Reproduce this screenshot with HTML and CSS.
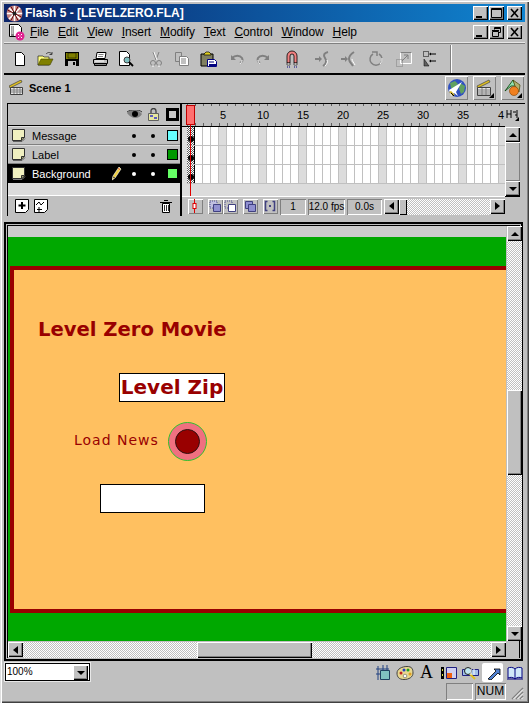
FILE: index.html
```html
<!DOCTYPE html>
<html lang="en">
<head>
    <meta charset="UTF-8">
    <meta name="viewport" content="width=device-width, initial-scale=1.0">
    <title>Flash 5 - [LEVELZERO.FLA]</title>
    <link rel="stylesheet" href="styles.css">
</head>
<body>
<div class="window">

    <!-- Title bar -->
    <div class="titlebar">
        <svg class="app-logo" width="17" height="17" viewBox="0 0 17 17">
            <circle cx="8.5" cy="8.5" r="8" fill="#c08080"/>
            <path d="M8.5 1v15M1 8.5h15M3 3l11 11M14 3L3 14" stroke="#fff" stroke-width="1.5"/>
            <path d="M5 1.5l7 14M1.5 5l14 7M12 1.5l-7 14" stroke="#701010" stroke-width="1"/>
            <circle cx="8.5" cy="8.5" r="2" fill="#202020"/>
        </svg>
        <span class="title-text">Flash 5 - [LEVELZERO.FLA]</span>
        <div class="win-buttons">
            <span class="win-btn"><svg width="15" height="14" viewBox="0 0 15 14"><rect x="3" y="10" width="6" height="2" fill="#000"/></svg></span>
            <span class="win-btn"><svg width="15" height="14" viewBox="0 0 15 14"><path d="M2.5 2.5h10v9h-10z M2 3.5h11" fill="none" stroke="#000"/></svg></span>
            <span class="win-btn win-btn-last"><svg width="15" height="14" viewBox="0 0 15 14"><path d="M4 3l7 8M11 3l-7 8" stroke="#000" stroke-width="1.6"/></svg></span>
        </div>
    </div>

    <!-- Menu -->
    <div class="menubar">
        <svg class="doc-icon" width="17" height="17" viewBox="0 0 17 17">
            <path d="M1.5.5h9l3 3v9h-12z" fill="#fff" stroke="#000"/>
            <path d="M3 2h3v10H3z" fill="#808080"/>
            <path d="M3.5 3h2M3.5 5h2M3.5 7h2M3.5 9h2" stroke="#fff"/>
            <circle cx="12" cy="12" r="4.5" fill="#e02090"/>
            <path d="M10 10h1v1h-1zM13 10h1v1h-1zM10 13h1v1h-1zM13 13h1v1h-1zM11.5 11.5h1v1h-1z" fill="#fff"/>
        </svg>
        <span class="menu-item"><u>F</u>ile</span>
        <span class="menu-item"><u>E</u>dit</span>
        <span class="menu-item"><u>V</u>iew</span>
        <span class="menu-item"><u>I</u>nsert</span>
        <span class="menu-item"><u>M</u>odify</span>
        <span class="menu-item"><u>T</u>ext</span>
        <span class="menu-item"><u>C</u>ontrol</span>
        <span class="menu-item"><u>W</u>indow</span>
        <span class="menu-item"><u>H</u>elp</span>
        <div class="win-buttons doc-buttons">
            <span class="win-btn"><svg width="15" height="14" viewBox="0 0 15 14"><rect x="3" y="10" width="6" height="2" fill="#000"/></svg></span>
            <span class="win-btn"><svg width="15" height="14" viewBox="0 0 15 14"><path d="M5.5 4.5v-2h6v5h-2M3.5 6.5h6v5h-6z M3 5.5h7M5 3.5h7" fill="none" stroke="#000"/></svg></span>
            <span class="win-btn win-btn-last"><svg width="15" height="14" viewBox="0 0 15 14"><path d="M4 3l7 8M11 3l-7 8" stroke="#000" stroke-width="1.6"/></svg></span>
        </div>
    </div>

    <!-- Main toolbar -->
    <div class="toolbar">
        <span class="tool"><svg width="16" height="16" viewBox="0 0 16 16"><path d="M3.5 1.5h6l3 3v10h-9z" fill="#fff" stroke="#000"/></svg></span>
        <span class="tool"><svg width="18" height="16" viewBox="0 0 18 16"><path d="M1 5h5l1 1h5v8H1z" fill="#ffff80" stroke="#000" stroke-width=".6"/><path d="M1 14l3-6h12l-3 6z" fill="#808000" stroke="#404000" stroke-width=".6"/><path d="M9 3c2-2 4-2 6 0M15 1v2.500h-2.500" fill="none" stroke="#404040"/></svg></span>
        <span class="tool"><svg width="16" height="16" viewBox="0 0 16 16"><path d="M1 1h14v14H1z" fill="#000"/><path d="M2 2h12v6H2z" fill="#808000"/><path d="M4 2h8v5H4z" fill="#808000" stroke="#000" stroke-width=".5"/><path d="M4 10h8v5H4z" fill="#c0c0c0"/><path d="M9 11h2v3H9z" fill="#000"/></svg></span>
        <span class="tool tool-gap2"><svg width="17" height="16" viewBox="0 0 17 16"><path d="M5 1.500h9l-1 6H4z" fill="#fff" stroke="#000"/><path d="M6.500 3.500h5M6 5.500h5" stroke="#808080"/><path d="M1.500 8.500h14v4h-14z" fill="#c0c0c0" stroke="#000"/><path d="M2.500 12.500h12v2h-12z" fill="#808080" stroke="#000"/><path d="M3 10h9" stroke="#fff"/></svg></span>
        <span class="tool"><svg width="17" height="16" viewBox="0 0 17 16"><path d="M1.500.5h7l3 3v11h-10z" fill="#fff" stroke="#000"/><circle cx="9" cy="9" r="3" fill="#80c0c0" stroke="#404040"/><path d="M11 11l4 4" stroke="#000" stroke-width="1.800"/></svg></span>
        <span class="tool tool-gap4"><svg width="16" height="16" viewBox="0 0 16 16" fill="none" stroke="#808080"><path d="M5 1l3 8M11 1L8 9"/><path d="M6 1l3 8" stroke="#fff"/><circle cx="5" cy="12" r="2.500" stroke="#808080"/><circle cx="11" cy="12" r="2.500"/><path d="M4 15h2M10 15h2" stroke="#fff"/></svg></span>
        <span class="tool"><svg width="16" height="16" viewBox="0 0 16 16"><path d="M1.500 1.500h6v9h-6z" fill="#c0c0c0" stroke="#808080"/><path d="M5.500 5.500h7l2 2v7h-9z" fill="#fff" stroke="#808080"/><path d="M7 8h5M7 10h5M7 12h5" stroke="#808080"/></svg></span>
        <span class="tool"><svg width="17" height="16" viewBox="0 0 17 16"><path d="M1 3h12v12H1z" fill="#808060" stroke="#000"/><path d="M4 3l2-2h3l2 2v1H4z" fill="#e0d020" stroke="#000" stroke-width=".7"/><path d="M7.500 8.500h7l2 2v5h-9z" fill="#fff" stroke="#000080"/><path d="M9 10.500h5v1H9zM9 13h7v2H9z" fill="#000080"/></svg></span>
        <span class="tool tool-gap3"><svg width="16" height="16" viewBox="0 0 16 16" fill="none"><path d="M3 7c3-3 8-3 10 0 1 2 0 4-2 5" stroke="#808080" stroke-width="2"/><path d="M2 4v5h5z" fill="#808080"/><path d="M13 9c0 2-1 3-2 4" stroke="#fff"/></svg></span>
        <span class="tool"><svg width="16" height="16" viewBox="0 0 16 16" fill="none"><path d="M13 7C10 4 5 4 3 7c-1 2 0 4 2 5" stroke="#808080" stroke-width="2"/><path d="M14 4v5H9z" fill="#808080"/><path d="M3 9c0 2 1 3 2 4" stroke="#fff"/></svg></span>
        <span class="tool tool-gap3"><svg width="16" height="18" viewBox="0 0 16 18"><path d="M3 13V6a5 5 0 0 1 10 0v7h-3V6a2 2 0 0 0-4 0v7z" fill="#f08080" stroke="#000" stroke-width=".8"/><path d="M3 13h3v2H3zM10 13h3v2h-3z" fill="#fff" stroke="#000" stroke-width=".6"/><path d="M3 17h1M5 17h1M10 17h1M12 17h1" stroke="#000080"/></svg></span>
        <span class="tool tool-gap4"><svg width="16" height="16" viewBox="0 0 16 16" fill="none"><path d="M1 8h6" stroke="#808080" stroke-width="2"/><path d="M5 5l3 3-3 3z" fill="#808080"/><path d="M14 1c-4 1-5 3-3 6 2 3 1 6-2 8" stroke="#808080" stroke-width="2"/><path d="M13 9c1 2 0 4-2 6" stroke="#fff"/></svg></span>
        <span class="tool"><svg width="16" height="16" viewBox="0 0 16 16" fill="none"><path d="M1 8h6" stroke="#808080" stroke-width="2"/><path d="M5 5l3 3-3 3z" fill="#808080"/><path d="M14 1c-3 2-5 4-5 7s3 5 4 7" stroke="#808080" stroke-width="2"/><path d="M12 8c0 2 2 4 3 6" stroke="#fff"/></svg></span>
        <span class="tool tool-gap2"><svg width="16" height="16" viewBox="0 0 16 16" fill="none"><path d="M5 3a6 6 0 1 0 6 0" stroke="#808080" stroke-width="1.500"/><path d="M12 13a6 6 0 0 0 2-6" stroke="#fff"/><path d="M4 1h5v4" stroke="#808080" stroke-width="1.500"/></svg></span>
        <span class="tool tool-gap2"><svg width="16" height="16" viewBox="0 0 16 16" fill="none"><path d="M4.500 1.500h11v11h-11z" fill="#c0c0c0" stroke="#fff"/><path d="M4.500 1.500h11" stroke="#808080"/><path d="M.5 8.500h6v7h-6z" stroke="#808080" stroke-dasharray="1 1"/><path d="M6 10l6-6M8 4h4v4" stroke="#808080"/></svg></span>
        <span class="tool"><svg width="14" height="16" viewBox="0 0 14 16"><path d="M.5.500h5v5h-5z" fill="#c0c0c0" stroke="#000" stroke-dasharray="1 1"/><path d="M1 8l5 7H1z" fill="#606060" stroke="#000" stroke-width=".5"/><path d="M8 3h5M8 10h5" stroke="#000"/><path d="M8 1.500l-2 1.500 2 1.500zM8 8.500l-2 1.500 2 1.500z" fill="#000"/></svg></span>
    </div>

    <!-- Scene bar -->
    <div class="scenebar">
        <svg class="clapper" width="14" height="15" viewBox="0 0 14 15">
            <path d="M0 6L12 0l1 2L1 8z" fill="#e0c020" stroke="#404040" stroke-width=".7"/>
            <path d="M1.500 7.500h12v7h-12z" fill="#e8e8e8" stroke="#404040"/>
            <path d="M2 10h11M2 12h11M5 8v6M8 8v6M11 8v6" stroke="#808080"/>
        </svg>
        <span class="scene-name">Scene 1</span>
        <div class="scene-buttons">
            <span class="scene-btn"><svg width="20" height="20" viewBox="0 0 20 20"><circle cx="10" cy="10" r="9" fill="#3050c0"/><path d="M3 5l5-2 3 3-4 5-3-1zM13 5l5 3-1 6-3 2-2-5z" fill="#60a060"/><path d="M2 12l13-8-6 10 2 4-4-3-3 3z" fill="#fff"/><path d="M2 14l4 4 2-1-4-4z" fill="#d0b020"/><path d="M4 15l3 3" stroke="#000"/></svg></span>
            <span class="scene-btn scene-btn-menu"><svg width="18" height="18" viewBox="0 0 18 18"><path d="M1 7L13 1l1 2L2 9z" fill="#e0c020" stroke="#404040" stroke-width=".7"/><path d="M1.500 8.500h13v8h-13z" fill="#e8e8e8" stroke="#404040"/><path d="M2 11h12M2 13h12M2 15h12M6 9v7M10 9v7" stroke="#808080"/></svg></span>
            <span class="scene-btn scene-btn-menu"><svg width="18" height="18" viewBox="0 0 18 18"><path d="M1 12L9 1l3 6H7z" fill="#90e0b0" stroke="#004000" stroke-width=".8"/><path d="M9 1l7 5-1 7-4-6z" fill="#b0b070" stroke="#404000" stroke-width=".7"/><circle cx="10" cy="12" r="4.500" fill="#f08020" stroke="#804000" stroke-width=".6"/></svg></span>
        </div>
    </div>

    <!-- Timeline -->
    <div class="timeline">
        <div class="layers">
            <div class="layers-head">
                <svg class="eye-icon" width="16" height="10" viewBox="0 0 16 10">
                    <path d="M0 3c4-4 11-4 15 1-3 5-10 6-15-1z" fill="#808080"/>
                    <circle cx="8" cy="4" r="3" fill="#000"/>
                    <path d="M0 2C4-1 11-1 15 2" fill="none" stroke="#303030"/>
                </svg>
                <svg class="lock-icon" width="11" height="13" viewBox="0 0 11 13">
                    <path d="M3 6V3a2.500 2.500 0 0 1 5 0v3" fill="none" stroke="#404040" stroke-width="1.300"/>
                    <path d="M.5 5.500h10v7H.5z" fill="#e8e8a0" stroke="#606060"/>
                    <path d="M2 7h3v2H2zM6 9h3v2H6z" fill="#6060c0"/>
                </svg>
                <span class="outline-icon"></span>
            </div>
            <div class="layer-row">
                <svg class="layer-icon" width="14" height="13" viewBox="0 0 14 13"><path d="M.5.500h12v8l-3 3h-9z" fill="#f0f0c0" stroke="#303030"/><path d="M9.500 11.500v-3h3" fill="#a0a070" stroke="#303030"/><path d="M1 12.500h9l3-3" fill="none" stroke="#606060"/></svg>
                <span class="layer-name">Message</span>
                <span class="layer-dot"></span>
                <span class="layer-dot"></span>
                <span class="layer-color color-cyan"></span>
            </div>
            <div class="layer-row">
                <svg class="layer-icon" width="14" height="13" viewBox="0 0 14 13"><path d="M.5.500h12v8l-3 3h-9z" fill="#f0f0c0" stroke="#303030"/><path d="M9.500 11.500v-3h3" fill="#a0a070" stroke="#303030"/><path d="M1 12.500h9l3-3" fill="none" stroke="#606060"/></svg>
                <span class="layer-name">Label</span>
                <span class="layer-dot"></span>
                <span class="layer-dot"></span>
                <span class="layer-color color-green"></span>
            </div>
            <div class="layer-row layer-row-active">
                <svg class="layer-icon" width="14" height="13" viewBox="0 0 14 13"><path d="M.5.500h12v8l-3 3h-9z" fill="#f0f0c0" stroke="#303030"/><path d="M9.500 11.500v-3h3" fill="#a0a070" stroke="#303030"/><path d="M1 12.500h9l3-3" fill="none" stroke="#808080"/></svg>
                <span class="layer-name">Background</span>
                <svg class="pencil-icon" width="10" height="14" viewBox="0 0 10 14"><path d="M7 0l2 2-6 9-3 2 1-4z" fill="#f0d040" stroke="#fff" stroke-width=".6"/><path d="M6 1l2 2" stroke="#e06060"/><path d="M1 10l2 1" stroke="#404040"/></svg>
                <span class="layer-dot"></span>
                <span class="layer-dot"></span>
                <span class="layer-color color-lime"></span>
            </div>
            <div class="layers-empty"></div>
            <div class="layers-foot">
                <svg width="14" height="14" viewBox="0 0 14 14"><path d="M.5.500h13v10l-3 3H.5z" fill="#fff" stroke="#000"/><path d="M7 3v7M3.500 6.500h7" stroke="#000" stroke-width="2"/></svg>
                <svg width="14" height="14" viewBox="0 0 14 14"><path d="M.5.500h13v10l-3 3H.5z" fill="#fff" stroke="#000"/><path d="M2 6l3-3 2 3 3-3" fill="none" stroke="#000"/><path d="M5 8v5M3 10.500h5" stroke="#000"/></svg>
                <svg class="trash-icon" width="12" height="13" viewBox="0 0 12 13"><path d="M2.500 3.500h7v9h-7z" fill="#fff" stroke="#000"/><path d="M0 2.500h12M4 .5h4" stroke="#000"/><path d="M4.500 5v6M6.500 5v6M8.500 5v6" stroke="#000" stroke-width=".8"/></svg>
            </div>
        </div>

        <div class="frames">
            <div class="ruler">
                <span class="ruler-first">1</span>
                <span class="ruler-num">5</span>
                <span class="ruler-num">10</span>
                <span class="ruler-num">15</span>
                <span class="ruler-num">20</span>
                <span class="ruler-num">25</span>
                <span class="ruler-num">30</span>
                <span class="ruler-num">35</span>
                <span class="ruler-last">4</span>
            </div>
            <div class="frame-strip"><span class="keyframe"></span></div>
            <div class="frame-strip"><span class="keyframe"></span></div>
            <div class="frame-strip"><span class="keyframe"></span></div>
            <div class="frames-empty"></div>
            <div class="frames-foot">
                <span class="foot-btn foot-btn-first"><svg width="14" height="14" viewBox="0 0 14 14"><path d="M6.500 0v14" stroke="#e00000"/><rect x="5" y="4.500" width="3" height="5" fill="#fff" stroke="#e00000"/></svg></span>
                <span class="foot-btn foot-btn-gap"><svg width="14" height="14" viewBox="0 0 14 14"><path d="M2 2h7v7H2z" fill="#c0c0e0" stroke="#505090" stroke-dasharray="1 1"/><path d="M5.500 5.500h7v7h-7z" fill="#9090d0" stroke="#404080"/></svg></span>
                <span class="foot-btn"><svg width="14" height="14" viewBox="0 0 14 14"><path d="M2 2h7v7H2z" fill="none" stroke="#505090" stroke-dasharray="1 1"/><path d="M5.500 5.500h7v7h-7z" fill="#fff" stroke="#404080"/></svg></span>
                <span class="foot-btn foot-btn-gap"><svg width="14" height="14" viewBox="0 0 14 14"><path d="M2.500 2.500h7v7h-7z" fill="#9090d0" stroke="#404080"/><path d="M5.500 5.500h7v7h-7z" fill="#9090d0" stroke="#404080"/></svg></span>
                <span class="foot-btn foot-btn-gap"><svg width="14" height="14" viewBox="0 0 14 14"><path d="M4.500 2.500h-2v9h2M9.500 2.500h2v9h-2" fill="none" stroke="#404080" stroke-width="1.500"/><path d="M6 6h2v2H6z" fill="#404080"/></svg></span>
                <span class="foot-field field-frame">1</span>
                <span class="foot-field field-fps">12.0 fps</span>
                <span class="foot-field field-time">0.0s</span>
                <div class="hscroll hscroll-small">
                    <span class="sb-btn"><span class="arrow arrow-left"></span></span>
                    <span class="sb-thumb-small"></span>
                    <span class="sb-track"></span>
                    <span class="sb-btn"><span class="arrow arrow-right"></span></span>
                </div>
            </div>
            <div class="playhead"></div>
        </div>

        <div class="timeline-side">
            <span class="center-view"><svg width="15" height="16" viewBox="0 0 15 16"><path d="M2 3v8M2 7h4M6 3v8M8 5h3M12 3v8M10 8h2" stroke="#000" fill="none"/><path d="M14 10v4h-4z" fill="#000"/></svg></span>
            <div class="vscroll-small">
                <span class="sb-btn"><span class="arrow arrow-up"></span></span>
                <span class="sb-thumb-fill"></span>
                <span class="sb-btn"><span class="arrow arrow-down"></span></span>
            </div>
        </div>
    </div>

    <!-- Stage -->
    <div class="stage-frame">
        <div class="stage-inner">
            <div class="stage-view">
                <div class="pasteboard"></div>
                <div class="movie">
                    <div class="movie-area">
                        <div class="movie-title">Level Zero Movie</div>
                        <div class="zip-box">Level Zip</div>
                        <div class="load-label">Load News</div>
                        <div class="load-button"><span></span></div>
                        <div class="news-box"></div>
                    </div>
                </div>
                <div class="hscroll stage-hscroll">
                    <span class="sb-btn"><span class="arrow arrow-left"></span></span>
                    <span class="sb-track track-left"></span>
                    <span class="sb-thumb-wide"></span>
                    <span class="sb-track"></span>
                    <span class="sb-btn"><span class="arrow arrow-right"></span></span>
                </div>
            </div>
            <div class="vscroll stage-vscroll">
                <span class="sb-btn"><span class="arrow arrow-up"></span></span>
                <span class="sb-track track-top"></span>
                <span class="sb-thumb-tall"></span>
                <span class="sb-track"></span>
                <span class="sb-btn"><span class="arrow arrow-down"></span></span>
            </div>
        </div>
    </div>

    <!-- Zoom combo and launcher -->
    <div class="bottom">
        <div class="zoom-combo">
            <span class="zoom-value">100%</span>
            <span class="sb-btn"><span class="arrow arrow-down"></span></span>
        </div>
        <div class="launcher">
            <span class="launch"><svg width="14" height="16" viewBox="0 0 14 16"><path d="M4.500 5.500h9v9h-9z" fill="#80c0c0" stroke="#204060"/><path d="M0 4h13M0 9h4M2 1v14M7 0v5M11 0v5" stroke="#204080"/></svg></span>
            <span class="launch"><svg width="18" height="14" viewBox="0 0 18 14"><path d="M1 7c0-4 5-6.500 10-6.500S17 3 17 7s-4 6.500-9 6.500S1 11 1 7z" fill="#e8d890" stroke="#404040"/><circle cx="5" cy="7" r="1.500" fill="#c02020"/><circle cx="8" cy="4" r="1.500" fill="#2040c0"/><circle cx="12" cy="4" r="1.500" fill="#20a020"/><circle cx="14" cy="8" r="1.500" fill="#e0a020"/><circle cx="9" cy="10" r="1.800" fill="#fff" stroke="#404040" stroke-width=".5"/></svg></span>
            <span class="launch launch-a">A</span>
            <span class="launch"><svg width="16" height="12" viewBox="0 0 16 12"><path d="M5.500.5h10v11h-10z" fill="#d0d0f0" stroke="#202080"/><path d="M6 6h5v5H6z" fill="#f06010"/><path d="M0 0h3v12H0z" fill="#000"/><path d="M1 2h1v2H1zM1 7h1v2H1z" fill="#e0e040"/></svg></span>
            <span class="launch"><svg width="17" height="14" viewBox="0 0 17 14"><path d="M.5 3.500h16v6H.5z" fill="#a0c0e8" stroke="#202080"/><circle cx="6" cy="5" r="3.500" fill="#c0e8f0" stroke="#202020"/><path d="M8 8l5 5" stroke="#e0c020" stroke-width="2"/><path d="M9 3v6M12 3v6" stroke="#fff"/></svg></span>
            <span class="launch launch-on"><svg width="16" height="14" viewBox="0 0 16 14"><path d="M3 13l8-8-2-2h6v6l-2-2-7 7z" fill="#5080d0" stroke="#000" stroke-width=".8"/></svg></span>
            <span class="launch"><svg width="16" height="14" viewBox="0 0 16 14"><path d="M8 3C6 1 3 1 1 2v10c2-1 5-1 7 1 2-2 5-2 7-1V2c-2-1-5-1-7 1z" fill="#d0e8f8" stroke="#000080"/><path d="M8 3v10" stroke="#000080"/><path d="M0 13h16" stroke="#000080"/></svg></span>
        </div>
        <div class="statusbar">
            <span class="status-cell status-blank"></span>
            <span class="status-cell status-num">NUM</span>
            <svg class="grip" width="13" height="13" viewBox="0 0 13 13"><path d="M12 1L1 12M12 5l-7 7M12 9l-3 3" stroke="#808080" stroke-width="1.400"/><path d="M12 2.500L2.500 12M12 6.500L6.500 12M12 10.500L10.500 12" stroke="#fff"/></svg>
        </div>
    </div>
</div>
</body>
</html>
```

FILE: styles.css
```css
* {
    box-sizing: border-box;
}
html, body {
    margin: 0;
    padding: 0;
}
body {
    font-family: "Liberation Sans", Arial, sans-serif;
    font-size: 12px;
    color: #000;
    background-color: #c0c0c0;
}
svg {
    display: block;
    flex: none;
}
.window {
    position: relative;
    width: 529px;
    height: 703px;
    overflow: hidden;
    background-color: #c0c0c0;
    padding: 4px 4px 0;
    display: flex;
    flex-direction: column;
    box-shadow: inset 1px 1px 0 #dfdfdf, inset 2px 2px 0 #fff, inset -1px -1px 0 #404040, inset -2px -2px 0 #808080;
}

/* title bar */
.titlebar {
    height: 18px;
    display: flex;
    align-items: center;
    padding-left: 2px;
    background: linear-gradient(90deg, #0a246a, #1084d0);
}
.app-logo {
    margin-right: 2px;
}
.title-text {
    color: #fff;
    font-weight: bold;
    font-size: 12px;
}
.win-buttons {
    margin-left: auto;
    display: flex;
    padding-right: 3px;
}
.win-btn {
    width: 15px;
    height: 14px;
    margin-left: 1px;
    background-color: #c0c0c0;
    box-shadow: inset 1px 1px 0 #fff, inset -1px -1px 0 #000, inset -2px -2px 0 #808080;
}
.win-btn-last {
    margin-left: 3px;
}

/* menu */
.menubar {
    height: 21px;
    display: flex;
    align-items: center;
    padding-left: 4px;
    border-bottom: 1px solid #e8e8e8;
    box-shadow: 0 1px 0 #808080;
}
.doc-icon {
    margin-right: 5px;
}
.menu-item {
    margin-right: 9px;
    letter-spacing: -0.1px;
    white-space: nowrap;
}
.doc-buttons {
    padding-right: 3px;
}

/* main toolbar */
.toolbar {
    height: 30px;
    margin-top: 2px;
    padding-left: 3px;
    display: flex;
    align-items: center;
    border-bottom: 2px solid #000;
    position: relative;
}
.toolbar::after {
    content: "";
    position: absolute;
    left: 446px;
    top: 0;
    bottom: 0;
    width: 1px;
    background-color: #808080;
    box-shadow: 1px 0 0 #fff;
}
.tool {
    width: 26px;
    height: 20px;
    display: flex;
    align-items: center;
    justify-content: center;
    flex: none;
}
.tool-gap2 {
    margin-left: 2px;
}
.tool-gap3 {
    margin-left: 3px;
}
.tool-gap4 {
    margin-left: 4px;
}

/* scene bar */
.scenebar {
    height: 25px;
    display: flex;
    align-items: center;
    padding-left: 5px;
}
.clapper {
    margin-right: 6px;
}
.scene-name {
    font-weight: bold;
    font-size: 11px;
}
.scene-buttons {
    margin-left: auto;
    padding-right: 1px;
    display: flex;
    gap: 5px;
}
.scene-btn {
    position: relative;
    width: 23px;
    height: 24px;
    display: flex;
    align-items: center;
    justify-content: center;
    box-shadow: inset 1px 1px 0 #fff, inset -1px -1px 0 #808080;
}
.scene-btn-menu::after {
    content: "";
    position: absolute;
    right: 2px;
    bottom: 2px;
    border-style: solid;
    border-width: 0 0 5px 5px;
    border-color: transparent transparent #000 transparent;
}

/* timeline */
.timeline {
    height: 113px;
    margin: 3px 0 0 3px;
    display: flex;
    border-top: 1px solid #000;
}
.layers {
    width: 175px;
    border-left: 1px solid #000;
    border-right: 2px solid #000;
    display: flex;
    flex-direction: column;
    background-color: #c0c0c0;
}
.layers-head {
    height: 22px;
    border-bottom: 1px solid #000;
    display: flex;
    align-items: center;
    padding-left: 119px;
}
.eye-icon {
    margin-right: 5px;
}
.lock-icon {
    margin-right: 7px;
}
.outline-icon {
    width: 13px;
    height: 13px;
    border: 3px solid #000;
    background-color: #c8c8c8;
}
.layer-row {
    position: relative;
    height: 19px;
    display: flex;
    align-items: center;
    padding-left: 4px;
    border-top: 1px solid #e0e0e0;
    border-bottom: 1px solid #808080;
}
.layer-icon {
    margin-right: 6px;
}
.layer-name {
    width: 100px;
    font-size: 11px;
}
.layer-dot {
    width: 4px;
    height: 4px;
    border-radius: 50%;
    background-color: #000;
    margin-right: 15px;
}
.layer-color {
    width: 11px;
    height: 11px;
    border: 1px solid #000;
    margin-left: -3px;
}
.color-cyan {
    background-color: #66ffff;
}
.color-green {
    background-color: #009900;
}
.color-lime {
    background-color: #66ff66;
}
.layer-row-active {
    background-color: #000;
    color: #fff;
    border-color: #000;
}
.layer-row-active .layer-dot {
    background-color: #fff;
}
.layer-row-active .layer-name {
    width: 80px;
}
.pencil-icon {
    margin-right: 10px;
}
.layers-empty {
    height: 13px;
    background-color: #dcdcdc;
    border-bottom: 1px solid #fff;
}
.layers-foot {
    flex: 1;
    display: flex;
    align-items: center;
    gap: 5px;
    padding: 0 8px 0 7px;
}
.trash-icon {
    margin-left: auto;
}
.frames {
    position: relative;
    width: 323px;
    display: flex;
    flex-direction: column;
    background-color: #dcdcdc;
}
.ruler {
    height: 23px;
    flex: none;
    display: flex;
    align-items: center;
    overflow: hidden;
    padding-left: 5px;
    border-bottom: 1px solid #000;
    font-size: 11px;
    background:
        repeating-linear-gradient(90deg, #606060 0 1px, transparent 1px 8px) 5px 0 / 100% 2px no-repeat,
        repeating-linear-gradient(90deg, #606060 0 1px, transparent 1px 8px) 5px 100% / 100% 3px no-repeat,
        #c0c0c0;
}
.ruler-first {
    flex: none;
    width: 16px;
    padding-left: 1px;
}
.ruler-num {
    flex: none;
    width: 40px;
    text-align: center;
}
.ruler-last {
    flex: none;
    width: 21px;
    text-align: right;
}
.frame-strip {
    height: 19px;
    flex: none;
    margin-left: 5px;
    background:
        linear-gradient(#c0c0c0, #c0c0c0) 0 100% / 100% 1px no-repeat,
        repeating-linear-gradient(90deg, transparent 0 32px, #dcdcdc 32px 39px, transparent 39px 40px),
        repeating-linear-gradient(90deg, #fff 0 7px, #c0c0c0 7px 8px);
}
.keyframe {
    display: flex;
    width: 8px;
    height: 18px;
    align-items: center;
    justify-content: center;
    padding-top: 5px;
    background: repeating-conic-gradient(#606060 0 25%, #fff 0 50%) 0 0 / 2px 2px;
    border-right: 1px solid #000;
}
.keyframe::after {
    content: "";
    width: 6px;
    height: 6px;
    border-radius: 50%;
    background-color: #000;
}
.frames-empty {
    height: 13px;
    flex: none;
    border-bottom: 1px solid #fff;
}
.frames-foot {
    flex: 1;
    display: flex;
    align-items: center;
    background-color: #c0c0c0;
    padding-left: 6px;
}
.foot-btn {
    width: 15px;
    height: 15px;
    flex: none;
    box-shadow: inset 1px 1px 0 #fff, inset -1px -1px 0 #808080;
}
.foot-btn-gap {
    margin-left: 5px;
}
.foot-field {
    flex: none;
    height: 16px;
    line-height: 15px;
    text-align: center;
    font-size: 10px;
    white-space: nowrap;
    box-shadow: inset 1px 1px 0 #808080, inset -1px -1px 0 #fff;
}
.field-frame {
    width: 26px;
    margin-left: 2px;
}
.field-fps {
    width: 37px;
    margin-left: 2px;
}
.field-time {
    width: 35px;
    margin-left: 2px;
}
.hscroll-small {
    margin-left: 2px;
}
.playhead {
    position: absolute;
    left: 4px;
    top: 1px;
    width: 9px;
    height: 20px;
    background-color: #ff7070;
    border: 1px solid #c00000;
}
.playhead::after {
    content: "";
    position: absolute;
    left: 3px;
    top: 18px;
    width: 1px;
    height: 72px;
    background-color: #e00000;
}
.timeline-side {
    width: 16px;
    display: flex;
    flex-direction: column;
    border-left: 1px solid #000;
    margin-left: -1px;
}
.center-view {
    height: 23px;
    flex: none;
    padding-top: 3px;
}
.vscroll-small {
    height: 70px;
    display: flex;
    flex-direction: column;
    border-bottom: 1px solid #000;
}
.sb-thumb-fill {
    flex: 1;
    box-shadow: inset 1px 1px 0 #fff, inset -1px -1px 0 #808080;
}

/* scrollbars */
.sb-btn {
    width: 15px;
    height: 15px;
    flex: none;
    display: flex;
    align-items: center;
    justify-content: center;
    background-color: #c0c0c0;
    box-shadow: inset 1px 1px 0 #fff, inset -1px -1px 0 #000, inset -2px -2px 0 #808080;
}
.sb-track {
    flex: 1;
    background: repeating-conic-gradient(#c0c0c0 0 25%, #fff 0 50%) 0 0 / 2px 2px;
}
.arrow {
    width: 0;
    height: 0;
    border-style: solid;
    border-color: transparent;
}
.arrow-left {
    border-width: 4px 5px 4px 0;
    border-right-color: #000;
}
.arrow-right {
    border-width: 4px 0 4px 5px;
    border-left-color: #000;
}
.arrow-up {
    border-width: 0 4px 4px 4px;
    border-bottom-color: #000;
}
.arrow-down {
    border-width: 4px 4px 0 4px;
    border-top-color: #000;
}
.hscroll {
    display: flex;
    flex: 1;
    height: 16px;
}
.vscroll {
    display: flex;
    flex-direction: column;
    width: 15px;
}
.sb-thumb-small {
    width: 8px;
    flex: none;
    background-color: #c0c0c0;
    box-shadow: inset 1px 1px 0 #fff, inset -1px -1px 0 #000;
}

/* stage */
.stage-frame {
    width: 519px;
    height: 439px;
    margin-top: 6px;
    border: 2px solid #000;
    padding: 1px;
    background-color: #c0c0c0;
}
.stage-inner {
    height: 100%;
    display: flex;
    border: 1px solid #000;
    border-bottom: 0;
}
.stage-view {
    width: 498px;
    display: flex;
    flex-direction: column;
}
.pasteboard {
    height: 11px;
    flex: none;
    background-color: #cccccc;
}
.movie {
    height: 404px;
    flex: none;
    padding-top: 29px;
    overflow: hidden;
    background-color: #00a800;
}
.movie-area {
    position: relative;
    width: 520px;
    height: 347px;
    margin-left: 2px;
    border: 4px solid #990000;
    background-color: #ffc060;
}
.movie-title {
    position: absolute;
    left: 24px;
    top: 48px;
    color: #990000;
    font-family: "DejaVu Sans", Verdana, sans-serif;
    font-weight: bold;
    font-size: 19.6px;
    white-space: nowrap;
}
.zip-box {
    position: absolute;
    left: 105px;
    top: 103px;
    width: 106px;
    height: 29px;
    background-color: #fff;
    border: 1px solid #000;
    color: #990000;
    font-family: "DejaVu Sans", Verdana, sans-serif;
    font-weight: bold;
    font-size: 20px;
    line-height: 26px;
    text-align: center;
    white-space: nowrap;
}
.load-label {
    position: absolute;
    left: 60px;
    top: 162px;
    color: #990000;
    font-family: "DejaVu Sans", Verdana, sans-serif;
    font-size: 14px;
    letter-spacing: 1px;
    white-space: nowrap;
}
.load-button {
    position: absolute;
    left: 154px;
    top: 152px;
    width: 39px;
    height: 39px;
    border-radius: 50%;
    background-color: #f07080;
    border: 1px solid #30c030;
    display: flex;
    align-items: center;
    justify-content: center;
}
.load-button span {
    width: 25px;
    height: 25px;
    border-radius: 50%;
    background-color: #990000;
    border: 1px solid #301010;
}
.news-box {
    position: absolute;
    left: 86px;
    top: 214px;
    width: 105px;
    height: 29px;
    background-color: #fff;
    border: 1px solid #000;
}
.stage-hscroll {
    flex: none;
    height: 17px;
    padding-top: 1px;
}
.track-left {
    flex: none;
    width: 174px;
}
.sb-thumb-wide {
    width: 115px;
    flex: none;
    background-color: #c0c0c0;
    box-shadow: inset 1px 1px 0 #fff, inset -1px -1px 0 #000, inset -2px -2px 0 #808080;
}
.stage-vscroll {
    margin-left: 1px;
    height: 415px;
}
.track-top {
    flex: none;
    width: 15px;
    height: 149px;
}
.sb-thumb-tall {
    height: 85px;
    flex: none;
    background-color: #c0c0c0;
    box-shadow: inset 1px 1px 0 #fff, inset -1px -1px 0 #000, inset -2px -2px 0 #808080;
}

/* bottom area */
.bottom {
    position: relative;
    flex: 1;
}
.zoom-combo {
    position: absolute;
    left: 1px;
    top: 2px;
    width: 85px;
    height: 18px;
    padding: 1px 1px 1px 0;
    display: flex;
    background-color: #fff;
    border: 1px solid #000;
    box-shadow: 0 0 0 1px #e8e8e8;
    font-size: 10px;
}
.zoom-value {
    flex: 1;
    line-height: 14px;
    padding-left: 1px;
}
.launcher {
    position: absolute;
    right: 0;
    top: 2px;
    display: flex;
    align-items: center;
    gap: 1px;
}
.launch {
    width: 21px;
    height: 19px;
    display: flex;
    align-items: center;
    justify-content: center;
}
.launch-a {
    font-family: "Liberation Serif", serif;
    font-size: 18px;
}
.launch-on {
    background-color: #fff;
    border-radius: 2px;
}
.statusbar {
    position: absolute;
    right: 0;
    top: 22px;
    display: flex;
    align-items: center;
}
.status-cell {
    height: 17px;
    line-height: 16px;
    text-align: center;
    box-shadow: inset 1px 1px 0 #808080, inset -1px -1px 0 #fff;
}
.status-blank {
    width: 27px;
}
.status-num {
    width: 31px;
    margin-left: 2px;
}
.grip {
    margin: 4px 1px 0 5px;
}
```
